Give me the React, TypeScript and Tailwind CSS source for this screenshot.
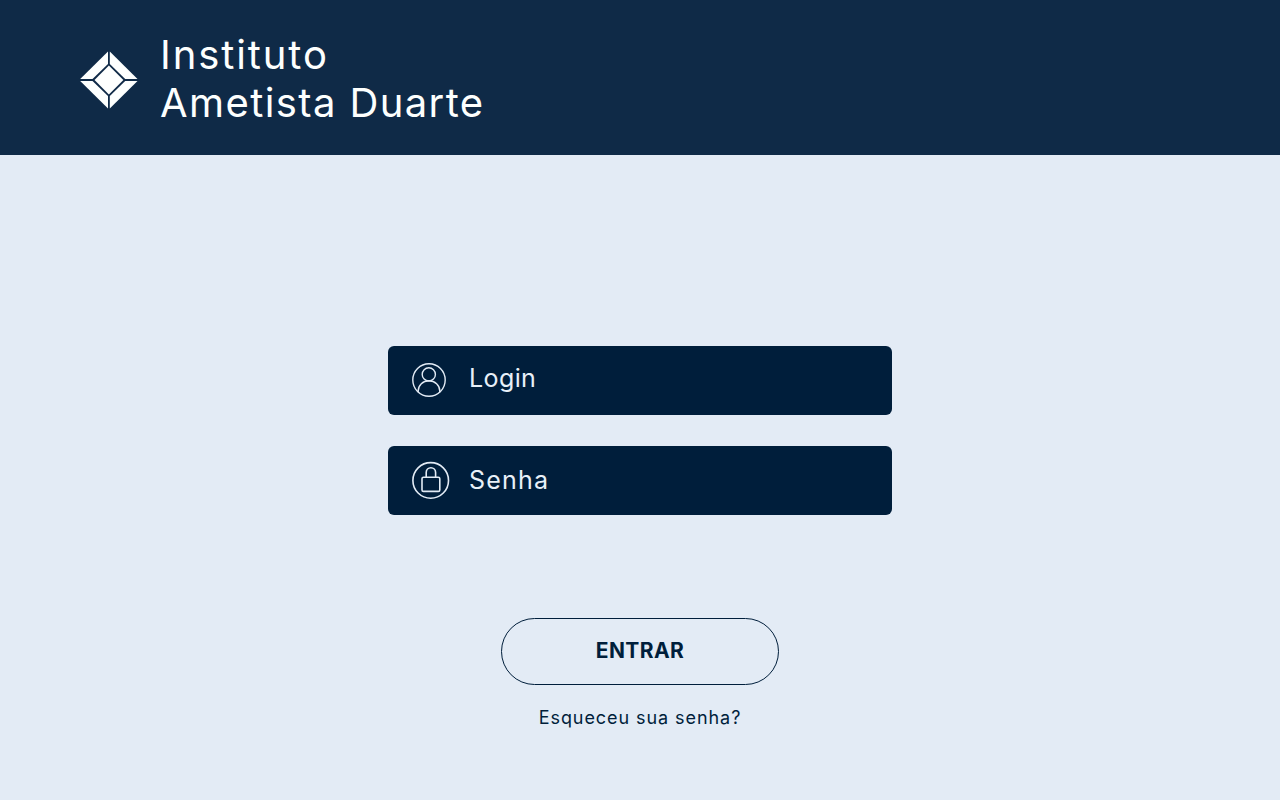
import type { ReactNode } from "react";

function Logo() {
  return (
    <svg viewBox="0 0 80 80" className="h-20 w-20 shrink-0" fill="#fdfffe">
      <path d="M38 11.5V24L22.5 39H10.2z" />
      <path d="M39.8 11.5V24L55.2 39h12.3z" />
      <path d="M38 68.5V56L22.5 41H10.2z" />
      <path d="M39.8 68.5V56L55.2 41h12.3z" />
      <path d="M38.9 25.6 53.4 40 38.9 54.4 24.5 40z" />
    </svg>
  );
}

function UserIcon() {
  return (
    <svg viewBox="0 0 34 34" className="h-[34px] w-[34px]" fill="none" stroke="#e2ebf5" strokeWidth="1.4">
      <circle cx="17" cy="17" r="16.2" />
      <circle cx="16.8" cy="11.4" r="6.6" />
      <path d="M6.2 29.2V28c0-5.8 4.7-10.2 10.7-10.2s10.9 4.4 10.9 10.2v1.2" />
    </svg>
  );
}

function LockIcon() {
  return (
    <svg viewBox="0 0 38 38" className="h-[38px] w-[38px]" fill="none" stroke="#e2ebf5" strokeWidth="1.6">
      <circle cx="18.7" cy="19.4" r="17.8" />
      <rect x="10" y="16.2" width="17.8" height="14.2" rx="1.5" />
      <path d="M14.2 16.2V11.4a4.7 4.7 0 0 1 9.4 0v4.8" />
    </svg>
  );
}

function Field({ icon, children }: { icon: ReactNode; children: ReactNode }) {
  return (
    <div className="flex h-[69px] w-[504px] items-center rounded-[6px] bg-[#001e3b] pb-0.5 pl-6 text-[25px] leading-8 text-[#e8f0f8]">
      <span className="flex w-[57px] shrink-0">{icon}</span>
      {children}
    </div>
  );
}

export default function App() {
  return (
    <div className="flex h-[800px] w-full flex-col bg-[#e3ebf5] font-['Inter','Liberation_Sans',sans-serif] text-[#001e3b]">
      <header className="flex h-[155px] shrink-0 items-start bg-[#0f2a47] pl-[70px] text-[#fdfffe]">
        <div className="flex pt-10">
          <Logo />
        </div>
        <h1 className="pt-[31px] pl-[10px] text-[40px] leading-[48px] font-normal">
          <span className="block tracking-[1.9px]">Instituto</span>
          <span className="block tracking-[1.4px]">Ametista Duarte</span>
        </h1>
      </header>
      <main className="flex flex-col items-center pt-[191px]">
        <div className="flex flex-col gap-[31px]">
          <Field icon={<UserIcon />}>
            <span className="-mt-1 tracking-[0.4px]">Login</span>
          </Field>
          <Field icon={<LockIcon />}>
            <span className="tracking-[1.2px]">Senha</span>
          </Field>
        </div>
        <button className="mt-[103px] h-[67px] w-[278px] rounded-full border border-[#001e3b] pb-0.5 text-[21px] font-bold tracking-[0.4px]">
          ENTRAR
        </button>
        <a href="#" className="mt-[19px] text-[18px] leading-7 tracking-[0.93px]">
          Esqueceu sua senha?
        </a>
      </main>
    </div>
  );
}
